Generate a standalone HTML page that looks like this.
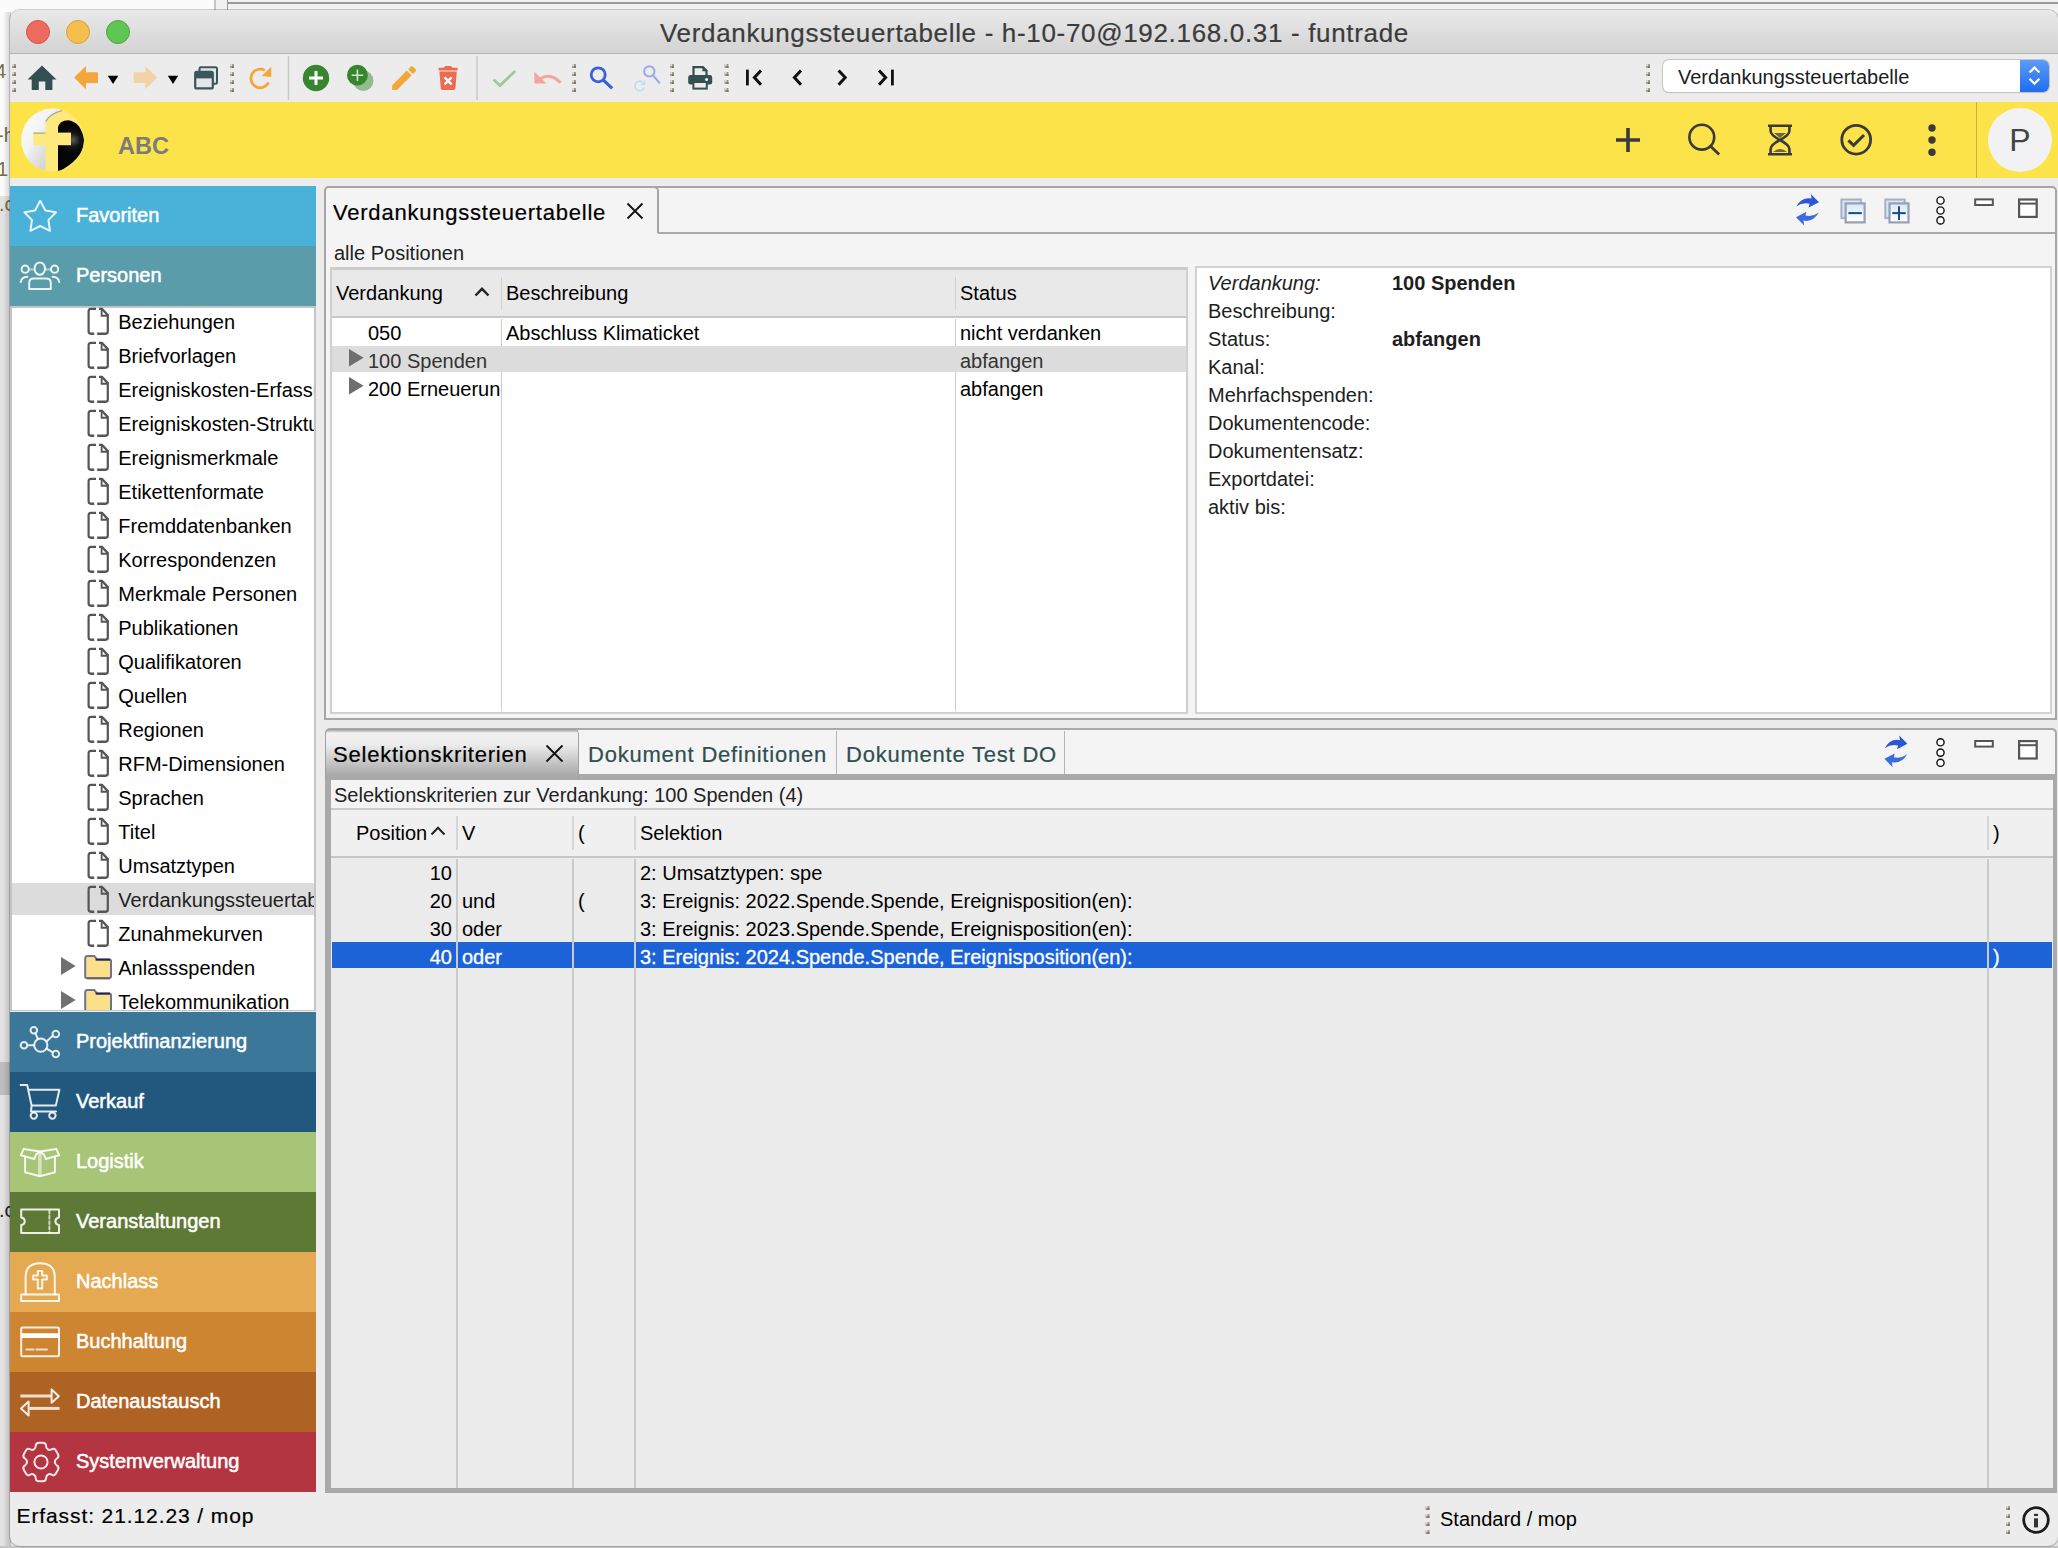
<!DOCTYPE html>
<html lang="de"><head><meta charset="utf-8"><title>Verdankungssteuertabelle</title>
<style>

html,body{margin:0;padding:0}
body{width:2058px;height:1548px;overflow:hidden;position:relative;background:#e2e2e2;font-family:"Liberation Sans",sans-serif;font-size:20px;color:#000}
.a{position:absolute}
.t{position:absolute;white-space:nowrap;line-height:24px;height:24px}
.w{color:#fff;-webkit-text-stroke:.3px #fff}
svg{position:absolute;overflow:visible}
#win{left:10px;top:10px;width:2048px;height:1536px;background:#ececec;border-radius:10px 10px 10px 10px;overflow:hidden;box-shadow:0 0 0 1px rgba(0,0,0,.18)}
#titlebar{left:0;top:0;width:2048px;height:44px;background:linear-gradient(#e9e9e9,#d3d3d3);border-bottom:1.5px solid #b2b2b2;box-sizing:border-box}
.tl{width:24px;height:24px;border-radius:50%;top:10px;box-sizing:border-box}
.grip{width:3px;background:repeating-linear-gradient(#9a9488 0 3px,transparent 3px 8px)}
.nav{left:0;width:306px;height:60px}
.nav .t{left:66px;top:17px;color:#fff;-webkit-text-stroke:.5px #fff}
.tree .t{left:106.1px}
.hdr{background:#e9e9e9}
.sf{-webkit-text-stroke:.22px currentColor}

</style></head>
<body>
<div class="a" style="left:0;top:0;width:2058px;height:14px;background:#f1f1f1"></div>
<div class="a" style="left:0;top:0;width:214px;height:196px;background:#fbfbfb"></div>
<div class="a" style="left:214px;top:0;width:1.5px;height:12px;background:#c4c4c4"></div>
<div class="a" style="left:226.5px;top:0;width:1.5px;height:12px;background:#9c9c9c"></div>
<div class="a" style="left:228px;top:1.5px;width:1830px;height:2px;background:#9a9a9a"></div>
<div class="a" style="left:0;top:196px;width:12px;height:1352px;background:#e2e2e2"></div>
<div class="a" style="left:0;top:1062px;width:12px;height:33px;background:#bebebe"></div>
<div class="t" style="left:-5px;top:59px;color:#7a6a46;width:15px;overflow:hidden">4</div>
<div class="t" style="left:-3px;top:123px;color:#7a6a46;width:13px;overflow:hidden">-h</div>
<div class="t" style="left:-3px;top:157px;color:#7a6a46;width:13px;overflow:hidden">1</div>
<div class="t" style="left:-1px;top:192px;color:#7a6a46;width:11px;overflow:hidden">.c</div>
<div class="t" style="left:-1px;top:1198px;color:#222;width:11px;overflow:hidden">.c</div>
<div class="a" style="left:3px;top:12px;width:8px;height:1536px;background:linear-gradient(90deg,rgba(0,0,0,0),rgba(0,0,0,.17))"></div>
<div class="a" style="left:0;top:1546px;width:2058px;height:2px;background:#c4c4c4"></div>
<div id="win" class="a">
<div id="titlebar" class="a"></div>
<div class="a tl" style="left:16px;background:#ee6a5e;border:1px solid #d5554a"></div>
<div class="a tl" style="left:56px;background:#f5bf4f;border:1px solid #d8a13a"></div>
<div class="a tl" style="left:96px;background:#61c554;border:1px solid #4ea73f"></div>
<div class="t sf" style="left:650px;top:8px;font-size:26px;line-height:30px;height:30px;letter-spacing:.67px;color:#3c3c3c">Verdankungssteuertabelle - h-10-70@192.168.0.31 - funtrade</div>
<div class="a" style="left:0;top:92px;width:2048px;height:76px;background:#fde34a"></div>
<div class="t" style="left:108px;top:124px;font-size:23.5px;font-weight:700;color:#7b7b7b">ABC</div>
<div class="a" style="left:1966px;top:92px;width:1px;height:76px;background:#c9b43a"></div>
<div class="a" style="left:1978px;top:98px;width:64px;height:64px;border-radius:50%;background:#f2f2f4"></div>
<div class="t" style="left:1978px;top:113px;width:64px;text-align:center;font-size:32px;line-height:34px;height:34px;color:#444">P</div>
<div class="a" style="left:1653px;top:50px;width:386px;height:32.4px;background:#fff;border-radius:6px;box-shadow:0 0 0 1px #c4c4c4,0 1px 1px #bbb"></div>
<div class="a" style="left:2010px;top:50px;width:29px;height:32.4px;background:linear-gradient(#5c9cf8,#1f6cf0);border-radius:0 6px 6px 0"></div>
<div class="t" style="left:1668px;top:55px;color:#1c1c1c">Verdankungssteuertabelle</div>
</div><div class="a" style="left:10px;top:0;width:306px;height:1548px">
<div class="a" style="left:0.4px;top:305.8px;width:305.4px;height:705.2px;background:#c4c4c4"></div><div class="a tree" style="left:2.2px;top:307.5px;width:301.9px;height:702px;background:#fff;overflow:hidden">
<div class="t" style="top:2.5px">Beziehungen</div>
<div class="t" style="top:36.5px">Briefvorlagen</div>
<div class="t" style="top:70.5px">Ereigniskosten-Erfassung</div>
<div class="t" style="top:104.5px">Ereigniskosten-Struktur</div>
<div class="t" style="top:138.5px">Ereignismerkmale</div>
<div class="t" style="top:172.5px">Etikettenformate</div>
<div class="t" style="top:206.5px">Fremddatenbanken</div>
<div class="t" style="top:240.5px">Korrespondenzen</div>
<div class="t" style="top:274.5px">Merkmale Personen</div>
<div class="t" style="top:308.5px">Publikationen</div>
<div class="t" style="top:342.5px">Qualifikatoren</div>
<div class="t" style="top:376.5px">Quellen</div>
<div class="t" style="top:410.5px">Regionen</div>
<div class="t" style="top:444.5px">RFM-Dimensionen</div>
<div class="t" style="top:478.5px">Sprachen</div>
<div class="t" style="top:512.5px">Titel</div>
<div class="t" style="top:546.5px">Umsatztypen</div>
<div class="a" style="left:0;top:575.8px;width:302px;height:31.4px;background:#dcdcdc"></div>
<div class="t" style="top:580.5px;color:#222">Verdankungssteuertabelle</div>
<div class="t" style="top:614.5px">Zunahmekurven</div>
<div class="t" style="top:648.5px">Anlassspenden</div>
<div class="t" style="top:682.5px">Telekommunikation</div>
</div>
<div class="a nav" style="top:186px;background:#4ab1d9"><div class="t">Favoriten</div></div>
<div class="a nav" style="top:246px;background:#5a9ca9"><div class="t">Personen</div></div>
<div class="a nav" style="top:1012px;background:#3a7799"><div class="t">Projektfinanzierung</div></div>
<div class="a nav" style="top:1072px;background:#22587e"><div class="t">Verkauf</div></div>
<div class="a nav" style="top:1132px;background:#a7c477"><div class="t">Logistik</div></div>
<div class="a nav" style="top:1192px;background:#5d7935"><div class="t">Veranstaltungen</div></div>
<div class="a nav" style="top:1252px;background:#e4a951"><div class="t">Nachlass</div></div>
<div class="a nav" style="top:1312px;background:#ce8531"><div class="t">Buchhaltung</div></div>
<div class="a nav" style="top:1372px;background:#ae6223"><div class="t">Datenaustausch</div></div>
<div class="a nav" style="top:1432px;background:#b33542"><div class="t">Systemverwaltung</div></div>
</div><div class="a" style="left:323.7px;top:185.6px;width:1733.3px;height:534.4px;background:#f4f4f4;border:2px solid #a6a6a6;border-radius:5px 5px 0 0;box-sizing:border-box"></div>
<div class="a" style="left:657.7px;top:231.5px;width:1397.3px;height:2px;background:#a9a9a9"></div>
<div class="a" style="left:323.7px;top:185.6px;width:335.2px;height:47.9px;border:2px solid #a6a6a6;border-bottom:none;border-radius:5px 5px 0 0;box-sizing:border-box;background:#f4f4f4"></div>
<div class="t sf" style="left:333px;top:199px;font-size:22px;line-height:28px;height:28px;letter-spacing:.78px">Verdankungssteuertabelle</div>
<svg style="left:627px;top:203px" width="16" height="16" viewBox="0 0 16 16"><path d="M0.5 0.5 L15.5 15.5 M15.5 0.5 L0.5 15.5" stroke="#111" stroke-width="1.8" fill="none"/></svg>
<div class="t" style="left:334px;top:241px;color:#222">alle Positionen</div>
<div class="a" style="left:330.3px;top:266.6px;width:857.7px;height:447.4px;background:#fff;border:2px solid #d0d0d0;border-top:3px solid #cbcbcb;box-sizing:border-box"></div>
<div class="a hdr" style="left:332.3px;top:269.6px;width:853.7px;height:46.6px;border-bottom:2px solid #c8c8c8"></div>
<div class="a" style="left:500.6px;top:277px;width:1.7px;height:33px;background:#d2d2d2"></div>
<div class="a" style="left:954.6px;top:277px;width:1.7px;height:33px;background:#d2d2d2"></div>
<div class="a" style="left:500.6px;top:318.5px;width:1.7px;height:392.5px;background:#cdcdcd"></div>
<div class="a" style="left:954.6px;top:318.5px;width:1.7px;height:392.5px;background:#cdcdcd"></div>
<div class="a" style="left:332.3px;top:346.4px;width:853.7px;height:25.4px;background:#dcdcdc"></div>
<div class="t" style="left:336px;top:281px">Verdankung</div>
<svg style="left:474px;top:287px" width="16" height="10" viewBox="0 0 16 10"><path d="M1.5 8.5 L8 1.8 L14.5 8.5" stroke="#222" stroke-width="2.4" fill="none"/></svg>
<div class="t" style="left:506px;top:281px">Beschreibung</div>
<div class="t" style="left:960px;top:281px">Status</div>
<div class="t" style="left:368px;top:321px">050</div>
<div class="t" style="left:506px;top:321px">Abschluss Klimaticket</div>
<div class="t" style="left:960px;top:321px">nicht verdanken</div>
<div class="t" style="left:368px;top:349px;color:#333">100 Spenden</div>
<div class="t" style="left:960px;top:349px;color:#333">abfangen</div>
<div class="t" style="left:368px;top:377px;width:133px;overflow:hidden">200 Erneuerung</div>
<div class="t" style="left:960px;top:377px">abfangen</div>
<svg style="left:348.8px;top:349.4px" width="15" height="18" viewBox="0 0 15 18"><path d="M0 0 L14.6 8.8 L0 17.6 Z" fill="#6e6e6e"/></svg>
<svg style="left:348.8px;top:377.4px" width="15" height="18" viewBox="0 0 15 18"><path d="M0 0 L14.6 8.8 L0 17.6 Z" fill="#6e6e6e"/></svg>
<div class="a" style="left:1194.5px;top:266px;width:857.5px;height:448px;background:#fff;border:2px solid #d2d2d2;box-sizing:border-box"></div>
<div class="t" style="left:1208px;top:271px;font-style:italic;color:#1e1e1e">Verdankung:</div>
<div class="t" style="left:1208px;top:299px;color:#1e1e1e">Beschreibung:</div>
<div class="t" style="left:1208px;top:327px;color:#1e1e1e">Status:</div>
<div class="t" style="left:1208px;top:355px;color:#1e1e1e">Kanal:</div>
<div class="t" style="left:1208px;top:383px;color:#1e1e1e">Mehrfachspenden:</div>
<div class="t" style="left:1208px;top:411px;color:#1e1e1e">Dokumentencode:</div>
<div class="t" style="left:1208px;top:439px;color:#1e1e1e">Dokumentensatz:</div>
<div class="t" style="left:1208px;top:467px;color:#1e1e1e">Exportdatei:</div>
<div class="t" style="left:1208px;top:495px;color:#1e1e1e">aktiv bis:</div>
<div class="t" style="left:1392px;top:271px;font-weight:700;color:#1e1e1e">100 Spenden</div>
<div class="t" style="left:1392px;top:327px;font-weight:700;color:#1e1e1e">abfangen</div>
<div class="a" style="left:324.5px;top:728px;width:1732.5px;height:765px;background:#a9a9a9;border-radius:5px 5px 0 0"></div>
<div class="a" style="left:326.5px;top:730px;width:1728.5px;height:44.3px;background:#f4f4f4;border-radius:4px 4px 0 0"></div>
<div class="a" style="left:325px;top:729px;width:254px;height:50px;border-radius:5px 5px 0 0;background:linear-gradient(#a8a8a8 0,#f2f2f2 3px,#ececec 30%,#a9a9a9 92%);border:1px solid #a0a0a0;border-bottom:none;box-sizing:border-box"></div>
<div class="t sf" style="left:333px;top:741px;font-size:22px;line-height:28px;height:28px;letter-spacing:.78px">Selektionskriterien</div>
<svg style="left:546px;top:745px" width="17" height="17" viewBox="0 0 17 17"><path d="M0.5 0.5 L16.5 16.5 M16.5 0.5 L0.5 16.5" stroke="#111" stroke-width="1.8" fill="none"/></svg>
<div class="t sf" style="left:588px;top:741px;font-size:22px;line-height:28px;height:28px;letter-spacing:.78px;color:#2f4f4f">Dokument Definitionen</div>
<div class="t sf" style="left:846px;top:741px;font-size:22px;line-height:28px;height:28px;letter-spacing:.78px;color:#2f4f4f">Dokumente Test DO</div>
<div class="a" style="left:836px;top:731px;width:1px;height:43px;background:#b4b4b4"></div>
<div class="a" style="left:1064px;top:731px;width:1px;height:43px;background:#b4b4b4"></div>
<div class="a" style="left:331px;top:780px;width:1721.5px;height:29.5px;background:#f4f4f4;border-bottom:2px solid #cbcbcb;box-sizing:border-box"></div>
<div class="t" style="left:334px;top:783px;color:#222">Selektionskriterien zur Verdankung: 100 Spenden (4)</div>
<div class="a" style="left:331px;top:809.5px;width:1721.5px;height:48.5px;background:#f0f0f0;border-bottom:2px solid #c6c6c6;box-sizing:border-box"></div>
<div class="a" style="left:331px;top:858px;width:1721.5px;height:630px;background:#ebebeb"></div>
<div class="a" style="left:332px;top:942.3px;width:1720px;height:25.6px;background:#1d63d8"></div>
<div class="a" style="left:456.4px;top:816px;width:1.8px;height:34px;background:#d6d6d6"></div>
<div class="a" style="left:456.4px;top:859px;width:1.8px;height:629px;background:#cacaca"></div>
<div class="a" style="left:572.4px;top:816px;width:1.8px;height:34px;background:#d6d6d6"></div>
<div class="a" style="left:572.4px;top:859px;width:1.8px;height:629px;background:#cacaca"></div>
<div class="a" style="left:634.4px;top:816px;width:1.8px;height:34px;background:#d6d6d6"></div>
<div class="a" style="left:634.4px;top:859px;width:1.8px;height:629px;background:#cacaca"></div>
<div class="a" style="left:1987.4px;top:816px;width:1.8px;height:34px;background:#d6d6d6"></div>
<div class="a" style="left:1987.4px;top:859px;width:1.8px;height:629px;background:#cacaca"></div>
<div class="t" style="left:356px;top:821px">Position</div>
<svg style="left:430px;top:826px" width="16" height="10" viewBox="0 0 16 10"><path d="M1.5 8.5 L8 1.8 L14.5 8.5" stroke="#222" stroke-width="2" fill="none"/></svg>
<div class="t" style="left:462px;top:821px">V</div>
<div class="t" style="left:578px;top:821px">(</div>
<div class="t" style="left:640px;top:821px">Selektion</div>
<div class="t" style="left:1993px;top:821px">)</div>
<div class="t" style="left:352px;width:100px;text-align:right;top:861px">10</div>
<div class="t" style="left:640px;top:861px">2: Umsatztypen: spe</div>
<div class="t" style="left:352px;width:100px;text-align:right;top:889px">20</div>
<div class="t" style="left:462px;top:889px">und</div>
<div class="t" style="left:578px;top:889px">(</div>
<div class="t" style="left:640px;top:889px">3: Ereignis: 2022.Spende.Spende, Ereignisposition(en):</div>
<div class="t" style="left:352px;width:100px;text-align:right;top:917px">30</div>
<div class="t" style="left:462px;top:917px">oder</div>
<div class="t" style="left:640px;top:917px">3: Ereignis: 2023.Spende.Spende, Ereignisposition(en):</div>
<div class="t w" style="left:352px;width:100px;text-align:right;top:945px">40</div>
<div class="t w" style="left:462px;top:945px">oder</div>
<div class="t w" style="left:640px;top:945px">3: Ereignis: 2024.Spende.Spende, Ereignisposition(en):</div>
<div class="t w" style="left:1993px;top:945px">)</div>
<div class="t sf" style="left:16.5px;top:1502px;font-size:21px;line-height:28px;height:28px;letter-spacing:.9px">Erfasst: 21.12.23 / mop</div>
<div class="t" style="left:1440px;top:1507px">Standard / mop</div>
<svg style="left:0;top:0" width="2058" height="1548" viewBox="0 0 2058 1548">
<defs><clipPath id="treeclip"><rect x="12" y="307" width="303" height="703"/></clipPath></defs>
<g id="tb"><rect x="12" y="64" width="4" height="4" fill="#a39d90"/><rect x="12" y="64" width="2" height="2" fill="#d9d6cf"/><rect x="14" y="66" width="2" height="2" fill="#7d776a"/><rect x="12" y="72" width="4" height="4" fill="#a39d90"/><rect x="12" y="72" width="2" height="2" fill="#d9d6cf"/><rect x="14" y="74" width="2" height="2" fill="#7d776a"/><rect x="12" y="80" width="4" height="4" fill="#a39d90"/><rect x="12" y="80" width="2" height="2" fill="#d9d6cf"/><rect x="14" y="82" width="2" height="2" fill="#7d776a"/><rect x="12" y="88" width="4" height="4" fill="#a39d90"/><rect x="12" y="88" width="2" height="2" fill="#d9d6cf"/><rect x="14" y="90" width="2" height="2" fill="#7d776a"/><rect x="230" y="64" width="4" height="4" fill="#a39d90"/><rect x="230" y="64" width="2" height="2" fill="#d9d6cf"/><rect x="232" y="66" width="2" height="2" fill="#7d776a"/><rect x="230" y="72" width="4" height="4" fill="#a39d90"/><rect x="230" y="72" width="2" height="2" fill="#d9d6cf"/><rect x="232" y="74" width="2" height="2" fill="#7d776a"/><rect x="230" y="80" width="4" height="4" fill="#a39d90"/><rect x="230" y="80" width="2" height="2" fill="#d9d6cf"/><rect x="232" y="82" width="2" height="2" fill="#7d776a"/><rect x="230" y="88" width="4" height="4" fill="#a39d90"/><rect x="230" y="88" width="2" height="2" fill="#d9d6cf"/><rect x="232" y="90" width="2" height="2" fill="#7d776a"/><rect x="572" y="64" width="4" height="4" fill="#a39d90"/><rect x="572" y="64" width="2" height="2" fill="#d9d6cf"/><rect x="574" y="66" width="2" height="2" fill="#7d776a"/><rect x="572" y="72" width="4" height="4" fill="#a39d90"/><rect x="572" y="72" width="2" height="2" fill="#d9d6cf"/><rect x="574" y="74" width="2" height="2" fill="#7d776a"/><rect x="572" y="80" width="4" height="4" fill="#a39d90"/><rect x="572" y="80" width="2" height="2" fill="#d9d6cf"/><rect x="574" y="82" width="2" height="2" fill="#7d776a"/><rect x="572" y="88" width="4" height="4" fill="#a39d90"/><rect x="572" y="88" width="2" height="2" fill="#d9d6cf"/><rect x="574" y="90" width="2" height="2" fill="#7d776a"/><rect x="670" y="64" width="4" height="4" fill="#a39d90"/><rect x="670" y="64" width="2" height="2" fill="#d9d6cf"/><rect x="672" y="66" width="2" height="2" fill="#7d776a"/><rect x="670" y="72" width="4" height="4" fill="#a39d90"/><rect x="670" y="72" width="2" height="2" fill="#d9d6cf"/><rect x="672" y="74" width="2" height="2" fill="#7d776a"/><rect x="670" y="80" width="4" height="4" fill="#a39d90"/><rect x="670" y="80" width="2" height="2" fill="#d9d6cf"/><rect x="672" y="82" width="2" height="2" fill="#7d776a"/><rect x="670" y="88" width="4" height="4" fill="#a39d90"/><rect x="670" y="88" width="2" height="2" fill="#d9d6cf"/><rect x="672" y="90" width="2" height="2" fill="#7d776a"/><rect x="724.5" y="64" width="4" height="4" fill="#a39d90"/><rect x="724.5" y="64" width="2" height="2" fill="#d9d6cf"/><rect x="726.5" y="66" width="2" height="2" fill="#7d776a"/><rect x="724.5" y="72" width="4" height="4" fill="#a39d90"/><rect x="724.5" y="72" width="2" height="2" fill="#d9d6cf"/><rect x="726.5" y="74" width="2" height="2" fill="#7d776a"/><rect x="724.5" y="80" width="4" height="4" fill="#a39d90"/><rect x="724.5" y="80" width="2" height="2" fill="#d9d6cf"/><rect x="726.5" y="82" width="2" height="2" fill="#7d776a"/><rect x="724.5" y="88" width="4" height="4" fill="#a39d90"/><rect x="724.5" y="88" width="2" height="2" fill="#d9d6cf"/><rect x="726.5" y="90" width="2" height="2" fill="#7d776a"/><rect x="1646" y="64" width="4" height="4" fill="#a39d90"/><rect x="1646" y="64" width="2" height="2" fill="#d9d6cf"/><rect x="1648" y="66" width="2" height="2" fill="#7d776a"/><rect x="1646" y="72" width="4" height="4" fill="#a39d90"/><rect x="1646" y="72" width="2" height="2" fill="#d9d6cf"/><rect x="1648" y="74" width="2" height="2" fill="#7d776a"/><rect x="1646" y="80" width="4" height="4" fill="#a39d90"/><rect x="1646" y="80" width="2" height="2" fill="#d9d6cf"/><rect x="1648" y="82" width="2" height="2" fill="#7d776a"/><rect x="1646" y="88" width="4" height="4" fill="#a39d90"/><rect x="1646" y="88" width="2" height="2" fill="#d9d6cf"/><rect x="1648" y="90" width="2" height="2" fill="#7d776a"/><path d="M42 65.5 L56.5 79.6 L52.4 79.6 L52.4 90 L45.3 90 L45.3 81.5 L38.8 81.5 L38.8 90 L31.7 90 L31.7 79.6 L27.5 79.6 Z" fill="#344f52"/><path d="M74 77.6 L86 66 L86 72.3 L98 72.3 L98 82.9 L86 82.9 L86 89.3 Z" fill="#f4a63a"/><path d="M107.8 75.8 L118.3 75.8 L113.05 84 Z" fill="#000"/><path d="M157.3 77.6 L145.4 66 L145.4 72.3 L133.7 72.3 L133.7 82.9 L145.4 82.9 L145.4 89.3 Z" fill="#f3d3a6"/><path d="M167.8 75.8 L178.2 75.8 L173 84 Z" fill="#000"/><rect x="199.5" y="67.3" width="17.5" height="16.5" rx="1.5" fill="#dfe4e4" stroke="#3c5659" stroke-width="2"/><rect x="195.2" y="71.8" width="17.6" height="16.6" rx="1.5" fill="#e3e7e7" stroke="#3c5659" stroke-width="2.2"/><rect x="195.2" y="71.8" width="17.6" height="6.6" fill="#3c5659"/><path d="M268.6 82.5 A9.3 9.3 0 1 1 264.8 70.3" fill="none" stroke="#f4a63a" stroke-width="2.8"/><path d="M271.3 66.8 L271.3 77 L261.6 76 Z" fill="#f4a63a"/><rect x="287.75" y="56" width="1.5" height="44" fill="#c9c9c9"/><rect x="476.25" y="56" width="1.5" height="44" fill="#c9c9c9"/><circle cx="316" cy="78" r="13.2" fill="#38852f"/><path d="M309 78 H323 M316 71 V85" stroke="#fff" stroke-width="3"/><circle cx="363.3" cy="80.8" r="10.2" fill="#93bb8e"/><circle cx="357.4" cy="75.2" r="10.4" fill="#38852f"/><path d="M351.6 75.2 H363.2 M357.4 69.4 V81" stroke="#cfe6cc" stroke-width="1.6"/><path d="M392.2 90 L392.2 85.2 L406.8 70.6 L411.6 75.4 L397 90 Z" fill="#f4a63a"/><path d="M408.2 69.2 L411 66.4 Q411.8 65.6 412.6 66.4 L415.8 69.6 Q416.6 70.4 415.8 71.2 L413 74 Z" fill="#f4a63a"/><path d="M438.6 67.8 H444 L445 66 H451.2 L452.2 67.8 H457.6 V70.4 H438.6 Z" fill="#ee6a50"/><path d="M439.4 71.6 H456.8 L455.4 88.2 Q455.2 90 453.4 90 H442.8 Q441 90 440.8 88.2 Z" fill="#ee6a50"/><path d="M444.6 77.4 L451.6 84.4 M451.6 77.4 L444.6 84.4" stroke="#fff" stroke-width="2.4"/><path d="M493.6 79.6 L500 85.6 L515.2 71" fill="none" stroke="#9fc89b" stroke-width="2.8"/><path d="M536 82.6 Q548 70 560.6 82.8" fill="none" stroke="#f3a59e" stroke-width="3"/><path d="M534.4 71.8 L534.4 83.4 L546.4 83.4 Z" fill="#f3a59e"/><circle cx="598.2" cy="74.8" r="7" fill="none" stroke="#3a5fd9" stroke-width="2.8"/><path d="M603.4 80.2 L612.2 88.4" stroke="#3a5fd9" stroke-width="3.2"/><circle cx="649.3" cy="71.4" r="5.2" fill="none" stroke="#9aa9eb" stroke-width="2"/><path d="M653.2 75.6 L659.8 83.2" stroke="#9aa9eb" stroke-width="2.2"/><path d="M644.2 87.6 A4.8 4.8 0 1 1 642.4 82" fill="none" stroke="#b9def2" stroke-width="1.6"/><path d="M645.4 80 L645.4 85 L640.6 84.4 Z" fill="#b9def2"/><path d="M692.4 66 H703.4 L707.6 70.2 V76 H692.4 Z" fill="#344f52"/><path d="M694.6 68.2 H702.4 V71.2 H705.4 V76 H694.6 Z" fill="#ececec"/><rect x="688.2" y="75" width="24" height="9.6" rx="2.4" fill="#344f52"/><circle cx="706.6" cy="79.4" r="1.5" fill="#fff"/><rect x="693.4" y="82" width="13.4" height="6.6" fill="#ececec" stroke="#344f52" stroke-width="2"/><path d="M747.4 69.6 V85.4" stroke="#111" stroke-width="2.8"/><path d="M761 70.4 L754.4 77.6 L761 84.8" fill="none" stroke="#111" stroke-width="3"/><path d="M801 70.4 L794.4 77.6 L801 84.8" fill="none" stroke="#111" stroke-width="3"/><path d="M838.6 70.4 L845.2 77.6 L838.6 84.8" fill="none" stroke="#111" stroke-width="3"/><path d="M879 70.4 L885.6 77.6 L879 84.8" fill="none" stroke="#111" stroke-width="3"/><path d="M892.4 69.6 V85.4" stroke="#111" stroke-width="2.8"/><path d="M2029.6 72.6 L2034.5 67.6 L2039.4 72.6 M2029.6 78.8 L2034.5 83.8 L2039.4 78.8" fill="none" stroke="#fff" stroke-width="2.2"/></g>
<g id="yl"><path d="M1616 140 H1640 M1628 128 V152" stroke="#3a3a3a" stroke-width="3.6"/><circle cx="1701.8" cy="137.2" r="12.4" fill="none" stroke="#3a3a3a" stroke-width="2.6"/><path d="M1710.6 146.2 L1719.2 154.6" stroke="#3a3a3a" stroke-width="2.8"/><path d="M1768 125.8 H1792 M1768 154.2 H1792" stroke="#3a3a3a" stroke-width="2.6"/><path d="M1770.6 126 V131 Q1770.6 135 1780 140 Q1789.4 135 1789.4 131 V126 M1770.6 154 V149 Q1770.6 145 1780 140 Q1789.4 145 1789.4 149 V154" fill="none" stroke="#3a3a3a" stroke-width="2.6"/><path d="M1774 133 H1786 L1780 138 Z M1773 152 Q1780 146 1787 152 Z" fill="#3a3a3a" opacity=".75"/><circle cx="1856.2" cy="139.7" r="14.4" fill="none" stroke="#3a3a3a" stroke-width="2.8"/><path d="M1848.4 140.4 L1853.6 145.4 L1864 135" fill="none" stroke="#3a3a3a" stroke-width="3"/><circle cx="1932" cy="128" r="3.7" fill="#3a3a3a"/><circle cx="1932" cy="140" r="3.7" fill="#3a3a3a"/><circle cx="1932" cy="152.2" r="3.7" fill="#3a3a3a"/><defs><linearGradient id="lg1" x1="0" y1="0" x2="1" y2="1"><stop offset="0" stop-color="#ffffff"/><stop offset=".45" stop-color="#f4f4f4"/><stop offset="1" stop-color="#bdbdbd"/></linearGradient><radialGradient id="lg2" cx="73" cy="140" r="14" gradientUnits="userSpaceOnUse"><stop offset="0" stop-color="#5a5a5a"/><stop offset=".5" stop-color="#151515"/><stop offset="1" stop-color="#050505"/></radialGradient><clipPath id="lc"><circle cx="52.6" cy="140" r="31.4"/></clipPath></defs><g clip-path="url(#lc)"><rect x="20" y="108" width="66" height="64" fill="#fde97c"/><path d="M45.5 173 L45.5 121.6 Q50 113.4 62 110.6 L62 100 L15 100 L15 173 Z" fill="url(#lg1)"/><path d="M45.5 121.6 Q50 113.4 62 110.6" fill="none" stroke="#a9a9a0" stroke-width="1.2"/><rect x="33.4" y="132.4" width="13" height="12.8" fill="#fde97c"/><rect x="33.4" y="132.4" width="12.1" height="1.6" fill="#b9b59a"/><path d="M58 172 L58 127.5 Q59.5 120.6 68 120.2 Q80.5 121.5 84 139 Q85 158 58 172 Z" fill="url(#lg2)"/><rect x="58" y="132.6" width="13" height="12.6" fill="#fde97c"/></g></g>
<g id="sd"><path d="M40.2 200.8 L45.3 210.4 L56.0 212.3 L48.4 220.1 L50.0 230.8 L40.2 226.0 L30.4 230.8 L32.0 220.1 L24.4 212.3 L35.1 210.4 Z" fill="none" stroke="#fff" stroke-opacity=".88" stroke-width="2" stroke-linejoin="round" stroke-linecap="round"/><g fill="none" stroke="#fff" stroke-opacity=".88" stroke-width="2" stroke-linejoin="round" stroke-linecap="round"><ellipse cx="39.8" cy="268.6" rx="5.2" ry="6.2"/><circle cx="25.2" cy="269.2" r="3.6"/><circle cx="54.6" cy="269.2" r="3.6"/><path d="M29.2 289 V283 Q29.2 278.6 34 278.6 H46 Q50.8 278.6 50.8 283 V289 Z"/><path d="M20.8 282 Q21.4 277 27.4 276.8 M59.2 282 Q58.6 277 52.6 276.8"/><path d="M29.6 269.4 H34 M45.6 269.4 H50.4" stroke-opacity=".5"/></g><g fill="none" stroke="#fff" stroke-opacity=".88" stroke-width="2" stroke-linejoin="round" stroke-linecap="round"><circle cx="40.8" cy="1045.2" r="6.6"/><circle cx="33.8" cy="1030.2" r="3.3"/><circle cx="55.8" cy="1034" r="3.3"/><circle cx="24" cy="1045.2" r="3.3"/><circle cx="55.8" cy="1054" r="3.3"/><path d="M35.4 1033.4 L38 1039 M52.8 1035.8 L47 1041 M27.6 1045.2 H33.8 M46.6 1048.6 L52.8 1052.4"/></g><g fill="none" stroke="#fff" stroke-opacity=".88" stroke-width="2" stroke-linejoin="round" stroke-linecap="round"><path d="M20.6 1085 H27.2 L31.6 1105.6 H55.8 L59.4 1089.8 H28.4 M31.6 1105.6 L31 1111.4 H56"/><circle cx="33.8" cy="1115.6" r="3.2"/><circle cx="52.4" cy="1115.6" r="3.2"/></g><g fill="none" stroke="#fff" stroke-opacity=".88" stroke-width="2" stroke-linejoin="round" stroke-linecap="round"><path d="M25.1 1156.4 V1172.3 L39.9 1176.2 L54.9 1172.3 V1156.4"/><path d="M23.8 1148.9 L39.9 1151.6 L56.2 1148.9"/><path d="M23.8 1148.9 L20.8 1155.2 L34.2 1159 L36 1154.6 L39.9 1151.6 L44 1154.6 L45.8 1159 L59.2 1155.2 L56.2 1148.9"/><path d="M39.9 1152 V1176" stroke-width="3.6" stroke-opacity=".55" stroke-linecap="butt"/></g><g fill="none" stroke="#fff" stroke-opacity=".88" stroke-width="2" stroke-linejoin="round" stroke-linecap="round"><path d="M21.2 1209.4 H59 V1217.4 Q55.4 1218 55.4 1221.2 Q55.4 1224.4 59 1225 V1233 H21.2 V1225 Q24.8 1224.4 24.8 1221.2 Q24.8 1218 21.2 1217.4 Z"/><path d="M49.4 1210.4 V1232.4" stroke-dasharray="3 2.4" stroke-opacity=".7"/></g><g fill="none" stroke="#fff" stroke-opacity=".88" stroke-width="2" stroke-linejoin="round" stroke-linecap="round"><path d="M25.6 1294.4 V1277 Q25.6 1263.2 40.2 1263.2 Q54.8 1263.2 54.8 1277 V1294.4"/><rect x="21.2" y="1294.4" width="37.8" height="6.6"/><path d="M37.8 1271 H42.2 V1275.6 H46.8 V1279.6 H42.2 V1288.6 H37.8 V1279.6 H33.2 V1275.6 H37.8 Z"/></g><g fill="none" stroke="#fff" stroke-opacity=".88" stroke-width="2" stroke-linejoin="round" stroke-linecap="round"><rect x="21.2" y="1327.4" width="37.8" height="28.8" rx="1.5"/><path d="M21.2 1335.6 H59" stroke-width="4.6" stroke-opacity="1" stroke-linecap="butt"/><path d="M26.4 1349.6 H33.6 M36.4 1349.6 H47" stroke-opacity=".75"/></g><g fill="none" stroke="#fff" stroke-opacity=".88" stroke-width="2" stroke-linejoin="round" stroke-linecap="round"><path d="M20.4 1396 H51" stroke-width="3" stroke-opacity=".8" stroke-linecap="butt"/><path d="M51.6 1389.4 V1402.8 L58.8 1396.2 Z"/><path d="M29.4 1408.4 H59.6" stroke-width="3" stroke-opacity=".8" stroke-linecap="butt"/><path d="M28.6 1401.6 V1415.6 L21 1408.6 Z"/></g><g fill="none" stroke="#fff" stroke-opacity=".88" stroke-width="2" stroke-linejoin="round" stroke-linecap="round"><path d="M33.9 1449.4 Q35.7 1448.4 35.8 1445.5 L35.8 1445.5 Q35.9 1442.7 39.1 1442.7 L42.7 1442.7 Q45.9 1442.7 46.0 1445.5 L46.0 1445.5 Q46.1 1448.4 47.9 1449.4 L47.9 1449.4 Q49.7 1450.5 52.1 1449.2 L52.1 1449.2 Q54.5 1447.9 56.0 1450.7 L57.9 1454.0 Q59.4 1456.8 57.1 1458.3 L57.1 1458.3 Q54.8 1459.9 54.8 1462.0 L54.8 1462.0 Q54.8 1464.1 57.1 1465.7 L57.1 1465.7 Q59.4 1467.2 57.9 1470.0 L56.0 1473.3 Q54.5 1476.1 52.1 1474.8 L52.1 1474.8 Q49.7 1473.5 47.9 1474.6 L47.9 1474.6 Q46.1 1475.6 46.0 1478.5 L46.0 1478.5 Q45.9 1481.3 42.7 1481.3 L39.1 1481.3 Q35.9 1481.3 35.8 1478.5 L35.8 1478.5 Q35.7 1475.6 33.9 1474.6 L33.9 1474.6 Q32.1 1473.5 29.7 1474.8 L29.7 1474.8 Q27.3 1476.1 25.8 1473.3 L23.9 1470.0 Q22.4 1467.2 24.7 1465.7 L24.7 1465.7 Q27.0 1464.1 27.0 1462.0 L27.0 1462.0 Q27.0 1459.9 24.7 1458.3 L24.7 1458.3 Q22.4 1456.8 23.9 1454.0 L25.8 1450.7 Q27.3 1447.9 29.7 1449.2 L29.7 1449.2 Q32.1 1450.5 33.9 1449.4 Z"/><circle cx="41" cy="1462" r="6.6"/></g></g>
<g id="tr" clip-path="url(#treeclip)"><g transform="translate(0 321.3) scale(1 1.07) translate(0 -321.8)"><path d="M96 310.2 H91 Q88.6 310.2 88.6 312.6 V331.4 Q88.6 333.4 91 333.4 H94.2 M97.2 333.4 H105.6 Q107.8 333.4 107.8 331.4 V316 L102 310.2 H99" fill="none" stroke="#555" stroke-width="2.2"/><path d="M101.6 310.6 V316.6 H107.4" fill="none" stroke="#555" stroke-width="1.8"/></g><g transform="translate(0 355.3) scale(1 1.07) translate(0 -355.8)"><path d="M96 344.2 H91 Q88.6 344.2 88.6 346.6 V365.4 Q88.6 367.4 91 367.4 H94.2 M97.2 367.4 H105.6 Q107.8 367.4 107.8 365.4 V350 L102 344.2 H99" fill="none" stroke="#555" stroke-width="2.2"/><path d="M101.6 344.6 V350.6 H107.4" fill="none" stroke="#555" stroke-width="1.8"/></g><g transform="translate(0 389.3) scale(1 1.07) translate(0 -389.8)"><path d="M96 378.2 H91 Q88.6 378.2 88.6 380.6 V399.4 Q88.6 401.4 91 401.4 H94.2 M97.2 401.4 H105.6 Q107.8 401.4 107.8 399.4 V384 L102 378.2 H99" fill="none" stroke="#555" stroke-width="2.2"/><path d="M101.6 378.6 V384.6 H107.4" fill="none" stroke="#555" stroke-width="1.8"/></g><g transform="translate(0 423.3) scale(1 1.07) translate(0 -423.8)"><path d="M96 412.2 H91 Q88.6 412.2 88.6 414.6 V433.4 Q88.6 435.4 91 435.4 H94.2 M97.2 435.4 H105.6 Q107.8 435.4 107.8 433.4 V418 L102 412.2 H99" fill="none" stroke="#555" stroke-width="2.2"/><path d="M101.6 412.6 V418.6 H107.4" fill="none" stroke="#555" stroke-width="1.8"/></g><g transform="translate(0 457.3) scale(1 1.07) translate(0 -457.8)"><path d="M96 446.2 H91 Q88.6 446.2 88.6 448.6 V467.4 Q88.6 469.4 91 469.4 H94.2 M97.2 469.4 H105.6 Q107.8 469.4 107.8 467.4 V452 L102 446.2 H99" fill="none" stroke="#555" stroke-width="2.2"/><path d="M101.6 446.6 V452.6 H107.4" fill="none" stroke="#555" stroke-width="1.8"/></g><g transform="translate(0 491.3) scale(1 1.07) translate(0 -491.8)"><path d="M96 480.2 H91 Q88.6 480.2 88.6 482.6 V501.4 Q88.6 503.4 91 503.4 H94.2 M97.2 503.4 H105.6 Q107.8 503.4 107.8 501.4 V486 L102 480.2 H99" fill="none" stroke="#555" stroke-width="2.2"/><path d="M101.6 480.6 V486.6 H107.4" fill="none" stroke="#555" stroke-width="1.8"/></g><g transform="translate(0 525.3) scale(1 1.07) translate(0 -525.8)"><path d="M96 514.2 H91 Q88.6 514.2 88.6 516.6 V535.4 Q88.6 537.4 91 537.4 H94.2 M97.2 537.4 H105.6 Q107.8 537.4 107.8 535.4 V520 L102 514.2 H99" fill="none" stroke="#555" stroke-width="2.2"/><path d="M101.6 514.6 V520.6 H107.4" fill="none" stroke="#555" stroke-width="1.8"/></g><g transform="translate(0 559.3) scale(1 1.07) translate(0 -559.8)"><path d="M96 548.2 H91 Q88.6 548.2 88.6 550.6 V569.4 Q88.6 571.4 91 571.4 H94.2 M97.2 571.4 H105.6 Q107.8 571.4 107.8 569.4 V554 L102 548.2 H99" fill="none" stroke="#555" stroke-width="2.2"/><path d="M101.6 548.6 V554.6 H107.4" fill="none" stroke="#555" stroke-width="1.8"/></g><g transform="translate(0 593.3) scale(1 1.07) translate(0 -593.8)"><path d="M96 582.2 H91 Q88.6 582.2 88.6 584.6 V603.4 Q88.6 605.4 91 605.4 H94.2 M97.2 605.4 H105.6 Q107.8 605.4 107.8 603.4 V588 L102 582.2 H99" fill="none" stroke="#555" stroke-width="2.2"/><path d="M101.6 582.6 V588.6 H107.4" fill="none" stroke="#555" stroke-width="1.8"/></g><g transform="translate(0 627.3) scale(1 1.07) translate(0 -627.8)"><path d="M96 616.2 H91 Q88.6 616.2 88.6 618.6 V637.4 Q88.6 639.4 91 639.4 H94.2 M97.2 639.4 H105.6 Q107.8 639.4 107.8 637.4 V622 L102 616.2 H99" fill="none" stroke="#555" stroke-width="2.2"/><path d="M101.6 616.6 V622.6 H107.4" fill="none" stroke="#555" stroke-width="1.8"/></g><g transform="translate(0 661.3) scale(1 1.07) translate(0 -661.8)"><path d="M96 650.2 H91 Q88.6 650.2 88.6 652.6 V671.4 Q88.6 673.4 91 673.4 H94.2 M97.2 673.4 H105.6 Q107.8 673.4 107.8 671.4 V656 L102 650.2 H99" fill="none" stroke="#555" stroke-width="2.2"/><path d="M101.6 650.6 V656.6 H107.4" fill="none" stroke="#555" stroke-width="1.8"/></g><g transform="translate(0 695.3) scale(1 1.07) translate(0 -695.8)"><path d="M96 684.2 H91 Q88.6 684.2 88.6 686.6 V705.4 Q88.6 707.4 91 707.4 H94.2 M97.2 707.4 H105.6 Q107.8 707.4 107.8 705.4 V690 L102 684.2 H99" fill="none" stroke="#555" stroke-width="2.2"/><path d="M101.6 684.6 V690.6 H107.4" fill="none" stroke="#555" stroke-width="1.8"/></g><g transform="translate(0 729.3) scale(1 1.07) translate(0 -729.8)"><path d="M96 718.2 H91 Q88.6 718.2 88.6 720.6 V739.4 Q88.6 741.4 91 741.4 H94.2 M97.2 741.4 H105.6 Q107.8 741.4 107.8 739.4 V724 L102 718.2 H99" fill="none" stroke="#555" stroke-width="2.2"/><path d="M101.6 718.6 V724.6 H107.4" fill="none" stroke="#555" stroke-width="1.8"/></g><g transform="translate(0 763.3) scale(1 1.07) translate(0 -763.8)"><path d="M96 752.2 H91 Q88.6 752.2 88.6 754.6 V773.4 Q88.6 775.4 91 775.4 H94.2 M97.2 775.4 H105.6 Q107.8 775.4 107.8 773.4 V758 L102 752.2 H99" fill="none" stroke="#555" stroke-width="2.2"/><path d="M101.6 752.6 V758.6 H107.4" fill="none" stroke="#555" stroke-width="1.8"/></g><g transform="translate(0 797.3) scale(1 1.07) translate(0 -797.8)"><path d="M96 786.2 H91 Q88.6 786.2 88.6 788.6 V807.4 Q88.6 809.4 91 809.4 H94.2 M97.2 809.4 H105.6 Q107.8 809.4 107.8 807.4 V792 L102 786.2 H99" fill="none" stroke="#555" stroke-width="2.2"/><path d="M101.6 786.6 V792.6 H107.4" fill="none" stroke="#555" stroke-width="1.8"/></g><g transform="translate(0 831.3) scale(1 1.07) translate(0 -831.8)"><path d="M96 820.2 H91 Q88.6 820.2 88.6 822.6 V841.4 Q88.6 843.4 91 843.4 H94.2 M97.2 843.4 H105.6 Q107.8 843.4 107.8 841.4 V826 L102 820.2 H99" fill="none" stroke="#555" stroke-width="2.2"/><path d="M101.6 820.6 V826.6 H107.4" fill="none" stroke="#555" stroke-width="1.8"/></g><g transform="translate(0 865.3) scale(1 1.07) translate(0 -865.8)"><path d="M96 854.2 H91 Q88.6 854.2 88.6 856.6 V875.4 Q88.6 877.4 91 877.4 H94.2 M97.2 877.4 H105.6 Q107.8 877.4 107.8 875.4 V860 L102 854.2 H99" fill="none" stroke="#555" stroke-width="2.2"/><path d="M101.6 854.6 V860.6 H107.4" fill="none" stroke="#555" stroke-width="1.8"/></g><g transform="translate(0 899.3) scale(1 1.07) translate(0 -899.8)"><path d="M96 888.2 H91 Q88.6 888.2 88.6 890.6 V909.4 Q88.6 911.4 91 911.4 H94.2 M97.2 911.4 H105.6 Q107.8 911.4 107.8 909.4 V894 L102 888.2 H99" fill="none" stroke="#555" stroke-width="2.2"/><path d="M101.6 888.6 V894.6 H107.4" fill="none" stroke="#555" stroke-width="1.8"/></g><g transform="translate(0 933.3) scale(1 1.07) translate(0 -933.8)"><path d="M96 922.2 H91 Q88.6 922.2 88.6 924.6 V943.4 Q88.6 945.4 91 945.4 H94.2 M97.2 945.4 H105.6 Q107.8 945.4 107.8 943.4 V928 L102 922.2 H99" fill="none" stroke="#555" stroke-width="2.2"/><path d="M101.6 922.6 V928.6 H107.4" fill="none" stroke="#555" stroke-width="1.8"/></g><path d="M61 957 L75.6 966 L61 975 Z" fill="#707070"/><path d="M85.2 958.4 Q85.2 956 87.6 956 H94.2 L97.2 959.6 H109.4 Q111 959.6 111 961.2 V976.6 Q111 978 109.4 978 H87 Q85.2 978 85.2 976.4 Z" fill="#fbe08c" stroke="#70728f" stroke-width="2"/><path d="M95.6 959.6 H110" stroke="#24264f" stroke-width="2"/><path d="M87 978.6 H110" stroke="#6d6456" stroke-width="1.6"/><path d="M61 991 L75.6 1000 L61 1009 Z" fill="#707070"/><path d="M85.2 992.4 Q85.2 990 87.6 990 H94.2 L97.2 993.6 H109.4 Q111 993.6 111 995.2 V1010.6 Q111 1012 109.4 1012 H87 Q85.2 1012 85.2 1010.4 Z" fill="#fbe08c" stroke="#70728f" stroke-width="2"/><path d="M95.6 993.6 H110" stroke="#24264f" stroke-width="2"/><path d="M87 1012.6 H110" stroke="#6d6456" stroke-width="1.6"/></g>
<g id="pn"><g transform="translate(1796 194)"><path d="M0.2 12.6 Q6 2.6 15.6 4.6 L14.8 0 L23 8.2 L12.6 13.6 L13.6 9.8 Q6.6 8 0.2 12.6 Z" fill="#2b57d6"/><path d="M22.8 18.6 Q17 28.6 7.4 26.6 L8.2 31.6 L0 23.2 L10.4 17.8 L9.4 21.6 Q16.4 23.4 22.8 18.6 Z" fill="#3b6be2"/></g><defs><linearGradient id="sg1840" x1="0" y1="0" x2="0" y2="1"><stop offset="0" stop-color="#d4e9f7"/><stop offset="1" stop-color="#ffffff"/></linearGradient></defs><rect x="1841.4" y="199.5" width="19.4" height="18.6" fill="#d6e6f4" stroke="#a7b0c4" stroke-width="2"/><rect x="1845.6000000000001" y="203.4" width="19" height="19" fill="url(#sg1840)" stroke="#979fb6" stroke-width="2.2"/><path d="M1848.4 213.1 H1861.8000000000002" stroke="#1c4b87" stroke-width="2"/><defs><linearGradient id="sg1884" x1="0" y1="0" x2="0" y2="1"><stop offset="0" stop-color="#d4e9f7"/><stop offset="1" stop-color="#ffffff"/></linearGradient></defs><rect x="1885.3" y="199.5" width="19.4" height="18.6" fill="#d6e6f4" stroke="#a7b0c4" stroke-width="2"/><rect x="1889.5" y="203.4" width="19" height="19" fill="url(#sg1884)" stroke="#979fb6" stroke-width="2.2"/><path d="M1892.3 213.1 H1905.7" stroke="#1c4b87" stroke-width="2"/><path d="M1899.0 206.3 V219.9" stroke="#1c4b87" stroke-width="2"/><circle cx="1940.5" cy="200.5" r="3.6" fill="#fff" stroke="#111" stroke-width="1.4"/><circle cx="1940.5" cy="210.5" r="3.6" fill="#fff" stroke="#111" stroke-width="1.4"/><circle cx="1940.5" cy="220.4" r="3.6" fill="#fff" stroke="#111" stroke-width="1.4"/><rect x="1975.2" y="199.4" width="17.6" height="5.6" fill="#fff" stroke="#555" stroke-width="2"/><rect x="2019.1" y="199.5" width="17.6" height="17.4" fill="#fff" stroke="#555" stroke-width="2.2"/><path d="M2019 203.6 H2037" stroke="#555" stroke-width="2"/><g transform="translate(1884.4 735.6)"><path d="M0.2 12.6 Q6 2.6 15.6 4.6 L14.8 0 L23 8.2 L12.6 13.6 L13.6 9.8 Q6.6 8 0.2 12.6 Z" fill="#2b57d6"/><path d="M22.8 18.6 Q17 28.6 7.4 26.6 L8.2 31.6 L0 23.2 L10.4 17.8 L9.4 21.6 Q16.4 23.4 22.8 18.6 Z" fill="#3b6be2"/></g><circle cx="1940.5" cy="742.3" r="3.6" fill="#fff" stroke="#111" stroke-width="1.4"/><circle cx="1940.5" cy="752.6" r="3.6" fill="#fff" stroke="#111" stroke-width="1.4"/><circle cx="1940.5" cy="762.8" r="3.6" fill="#fff" stroke="#111" stroke-width="1.4"/><rect x="1975.2" y="741" width="17.6" height="5.6" fill="#fff" stroke="#555" stroke-width="2"/><rect x="2019.1" y="741.1" width="17.6" height="17.4" fill="#fff" stroke="#555" stroke-width="2.2"/><path d="M2019 745.2 H2037" stroke="#555" stroke-width="2"/></g>
<g id="sb"><rect x="1425.5" y="1506" width="4" height="4" fill="#a39d90"/><rect x="1425.5" y="1506" width="2" height="2" fill="#d9d6cf"/><rect x="1427.5" y="1508" width="2" height="2" fill="#7d776a"/><rect x="1425.5" y="1514" width="4" height="4" fill="#a39d90"/><rect x="1425.5" y="1514" width="2" height="2" fill="#d9d6cf"/><rect x="1427.5" y="1516" width="2" height="2" fill="#7d776a"/><rect x="1425.5" y="1522" width="4" height="4" fill="#a39d90"/><rect x="1425.5" y="1522" width="2" height="2" fill="#d9d6cf"/><rect x="1427.5" y="1524" width="2" height="2" fill="#7d776a"/><rect x="1425.5" y="1530" width="4" height="4" fill="#a39d90"/><rect x="1425.5" y="1530" width="2" height="2" fill="#d9d6cf"/><rect x="1427.5" y="1532" width="2" height="2" fill="#7d776a"/><rect x="2006" y="1506" width="4" height="4" fill="#a39d90"/><rect x="2006" y="1506" width="2" height="2" fill="#d9d6cf"/><rect x="2008" y="1508" width="2" height="2" fill="#7d776a"/><rect x="2006" y="1514" width="4" height="4" fill="#a39d90"/><rect x="2006" y="1514" width="2" height="2" fill="#d9d6cf"/><rect x="2008" y="1516" width="2" height="2" fill="#7d776a"/><rect x="2006" y="1522" width="4" height="4" fill="#a39d90"/><rect x="2006" y="1522" width="2" height="2" fill="#d9d6cf"/><rect x="2008" y="1524" width="2" height="2" fill="#7d776a"/><rect x="2006" y="1530" width="4" height="4" fill="#a39d90"/><rect x="2006" y="1530" width="2" height="2" fill="#d9d6cf"/><rect x="2008" y="1532" width="2" height="2" fill="#7d776a"/><circle cx="2036" cy="1520" r="12.3" fill="none" stroke="#1c1c1c" stroke-width="2.8"/><path d="M2036 1518.3 V1527.4" stroke="#333" stroke-width="4"/><rect x="2034" y="1513.8" width="4" height="2.2" fill="#333"/></g>
</svg>
</body></html>
